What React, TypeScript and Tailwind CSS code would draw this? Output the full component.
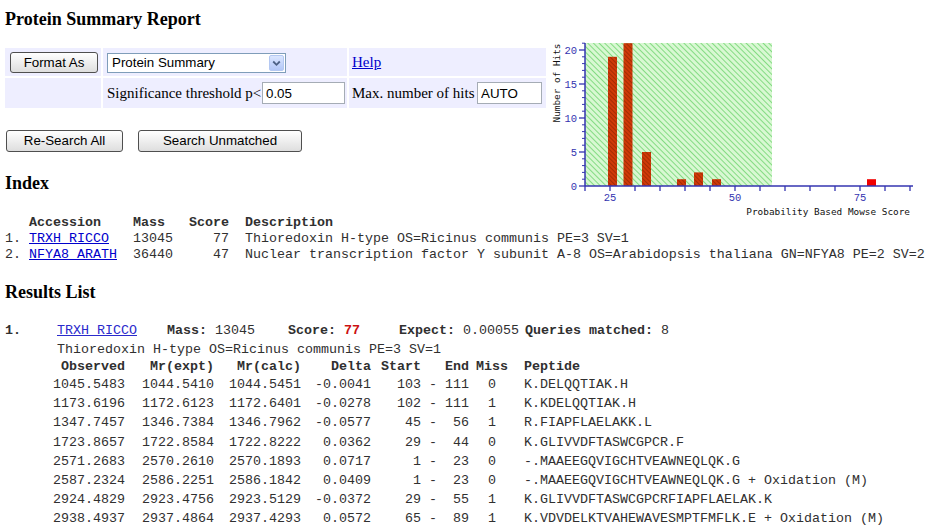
import React from 'react';

interface PeptideRow {
  observed: string;
  expt: string;
  calc: string;
  delta: string;
  start: string;
  end: string;
  miss: string;
  peptide: string;
}

const peptides: PeptideRow[] = [
  { observed: '1045.5483', expt: '1044.5410', calc: '1044.5451', delta: '-0.0041', start: '103', end: '111', miss: '0', peptide: 'K.DELQQTIAK.H' },
  { observed: '1173.6196', expt: '1172.6123', calc: '1172.6401', delta: '-0.0278', start: '102', end: '111', miss: '1', peptide: 'K.KDELQQTIAK.H' },
  { observed: '1347.7457', expt: '1346.7384', calc: '1346.7962', delta: '-0.0577', start: '45', end: '56', miss: '1', peptide: 'R.FIAPFLAELAKK.L' },
  { observed: '1723.8657', expt: '1722.8584', calc: '1722.8222', delta: '0.0362', start: '29', end: '44', miss: '0', peptide: 'K.GLIVVDFTASWCGPCR.F' },
  { observed: '2571.2683', expt: '2570.2610', calc: '2570.1893', delta: '0.0717', start: '1', end: '23', miss: '0', peptide: '-.MAAEEGQVIGCHTVEAWNEQLQK.G' },
  { observed: '2587.2324', expt: '2586.2251', calc: '2586.1842', delta: '0.0409', start: '1', end: '23', miss: '0', peptide: '-.MAAEEGQVIGCHTVEAWNEQLQK.G + Oxidation (M)' },
  { observed: '2924.4829', expt: '2923.4756', calc: '2923.5129', delta: '-0.0372', start: '29', end: '55', miss: '1', peptide: 'K.GLIVVDFTASWCGPCRFIAPFLAELAK.K' },
  { observed: '2938.4937', expt: '2937.4864', calc: '2937.4293', delta: '0.0572', start: '65', end: '89', miss: '1', peptide: 'K.VDVDELKTVAHEWAVESMPTFMFLK.E + Oxidation (M)' },
];

// histogram bars: local x, value, solid red for the significant hit
const bars = [
  { x: 62, v: 19, hit: false },
  { x: 77.5, v: 21, hit: false },
  { x: 96, v: 5, hit: false },
  { x: 131, v: 1, hit: false },
  { x: 148, v: 2, hit: false },
  { x: 166, v: 1, hit: false },
  { x: 321, v: 1, hit: true },
];

const ZERO = 150;
const UNIT = 6.8;

const MowseChart: React.FC = () => {
  const minor = Array.from({ length: 21 }, (_, i) => i + 1).filter((v) => v % 5 !== 0);
  return (
    <svg width="380" height="184" viewBox="0 0 380 184" className="mt-[7px] -mb-[27px] shrink-0">
      <defs>
        <pattern id="greenHatch" width="4" height="4" patternUnits="userSpaceOnUse" patternTransform="rotate(-45)">
          <rect width="4" height="4" fill="#d8f8d2" />
          <line x1="0" y1="0" x2="0" y2="4" stroke="#6fd46f" strokeWidth="1.6" />
        </pattern>
        <pattern id="barHatch" width="3" height="3" patternUnits="userSpaceOnUse" patternTransform="rotate(-45)">
          <rect width="3" height="3" fill="#d03a08" />
          <line x1="0" y1="0" x2="0" y2="3" stroke="#7a1e00" strokeWidth="1" />
        </pattern>
      </defs>

      <rect x="39" y="7" width="187" height="143" fill="url(#greenHatch)" />

      {bars.map((b, i) => (
        <rect
          key={i}
          x={b.x}
          y={ZERO - b.v * UNIT}
          width="9"
          height={b.v * UNIT}
          fill={b.hit ? '#f00000' : 'url(#barHatch)'}
        />
      ))}

      {/* axes */}
      <line x1="39" y1="7" x2="39" y2="150" stroke="#3434b0" strokeWidth="1.5" />
      <line x1="39" y1="150" x2="367" y2="150" stroke="#3434b0" strokeWidth="1.5" />

      {minor.map((v) => (
        <line key={v} x1="36" y1={ZERO - v * UNIT} x2="39" y2={ZERO - v * UNIT} stroke="#3434b0" strokeWidth="1" />
      ))}
      {[0, 5, 10, 15, 20].map((v) => (
        <g key={v}>
          <line x1="33" y1={ZERO - v * UNIT} x2="39" y2={ZERO - v * UNIT} stroke="#3434b0" strokeWidth="1.3" />
          <text x="31" y={ZERO - v * UNIT + 3.5} textAnchor="end" fontSize="10.5" fill="#3434b0" fontFamily="Liberation Mono, monospace">
            {v}
          </text>
        </g>
      ))}

      {Array.from({ length: 14 }, (_, k) => (
        <line key={k} x1={39 + 25 * k} y1="150" x2={39 + 25 * k} y2="155" stroke="#3434b0" strokeWidth="1.3" />
      ))}
      {[
        { x: 64, t: '25' },
        { x: 189, t: '50' },
        { x: 314, t: '75' },
      ].map((l) => (
        <text key={l.t} x={l.x} y="165" textAnchor="middle" fontSize="10.5" fill="#3434b0" fontFamily="Liberation Mono, monospace">
          {l.t}
        </text>
      ))}

      <text x="364" y="178.5" textAnchor="end" fontSize="9.4" fill="#111" fontFamily="DejaVu Sans Mono, monospace">
        Probability Based Mowse Score
      </text>
      <text transform="translate(13.5,47) rotate(-90)" textAnchor="middle" fontSize="9.4" fill="#111" fontFamily="DejaVu Sans Mono, monospace">
        Number of Hits
      </text>
    </svg>
  );
};

const App: React.FC = () => {
  return (
    <div className="w-[935px] min-h-[529px] bg-white pl-[5px] pt-[9px] text-black">
      <h1 className="font-['Liberation_Serif',serif] text-[18px] leading-[20px] font-bold">Protein Summary Report</h1>

      <div className="flex">
        <div className="w-[541px] shrink-0">
          {/* format form */}
          <div className="mt-[19px] grid grid-cols-[96px_244px_197px] grid-rows-[28px_30px] gap-[2px] bg-white">
            <div className="flex items-start bg-[#eeeeff] pl-[5px] pt-[4px]">
              <button className="h-[21px] w-[88px] rounded-[3px] border border-[#4f4f4f] bg-linear-to-b from-white to-[#dedede] font-['Liberation_Sans',Arial,sans-serif] text-[13.33px] leading-[19px] text-black">
                Format As
              </button>
            </div>
            <div className="bg-[#eeeeff] pl-[4px] pt-[5px]">
              <div className="flex h-[20px] w-[179px] items-center border border-[#7f9db9] bg-white">
                <span className="flex-1 pl-[4px] font-['Liberation_Sans',Arial,sans-serif] text-[13.33px] leading-[18px]">Protein Summary</span>
                <span className="mr-[1px] flex h-[16px] w-[15px] items-center justify-center rounded-[2px] border border-[#b4c8f2] bg-linear-to-b from-[#dbe6ff] to-[#b3c7f7]">
                  <svg width="9" height="7" viewBox="0 0 9 7">
                    <path d="M1.2 1.5 L4.5 4.8 L7.8 1.5" fill="none" stroke="#4d6185" strokeWidth="1.8" />
                  </svg>
                </span>
              </div>
            </div>
            <div className="flex items-center bg-[#eeeeff] pl-[3px]">
              <a href="#" className="font-['Liberation_Serif',serif] text-[15px] leading-[18px] text-[#0000cc] underline">
                Help
              </a>
            </div>

            <div className="bg-[#eeeeff]" />
            <div className="flex items-center bg-[#eeeeff] pl-[4px] pr-[2px]">
              <span className="font-['Liberation_Serif',serif] text-[15px] whitespace-nowrap">Significance threshold p&lt;</span>
              <input
                readOnly
                value="0.05"
                className="ml-auto h-[22px] w-[83px] border border-[#a5acb5] bg-white pl-[3px] font-['Liberation_Sans',Arial,sans-serif] text-[13.33px] outline-none"
              />
            </div>
            <div className="flex items-center bg-[#eeeeff] pl-[3px] pr-[4px]">
              <span className="font-['Liberation_Serif',serif] text-[15px] whitespace-nowrap">Max. number of hits</span>
              <input
                readOnly
                value="AUTO"
                className="ml-auto h-[22px] w-[65px] border border-[#a5acb5] bg-white pl-[3px] font-['Liberation_Sans',Arial,sans-serif] text-[13.33px] outline-none"
              />
            </div>
          </div>

          <div className="mt-[22px] flex">
            <button className="ml-[1px] h-[22px] w-[117px] rounded-[3px] border border-[#4f4f4f] bg-linear-to-b from-white to-[#dedede] font-['Liberation_Sans',Arial,sans-serif] text-[13.33px] leading-[20px]">
              Re-Search All
            </button>
            <button className="ml-[15px] h-[22px] w-[164px] rounded-[3px] border border-[#4f4f4f] bg-linear-to-b from-white to-[#dedede] font-['Liberation_Sans',Arial,sans-serif] text-[13.33px] leading-[20px]">
              Search Unmatched
            </button>
          </div>

          <h2 className="mt-[21px] font-['Liberation_Serif',serif] text-[18px] leading-[20px] font-bold">Index</h2>
        </div>

        <MowseChart />
      </div>

      {/* index listing */}
      <div className="mt-[22px] font-['Liberation_Mono','Courier_New',monospace] text-[13.333px] leading-[16px] whitespace-pre text-[#303030]">
        <div className="font-bold">{'   Accession    Mass   Score  Description'}</div>
        <div>
          {'1. '}
          <a href="#" className="text-[#0000cc] underline">TRXH_RICCO</a>
          {'   13045     77  Thioredoxin H-type OS=Ricinus communis PE=3 SV=1'}
        </div>
        <div>
          {'2. '}
          <a href="#" className="text-[#0000cc] underline">NFYA8_ARATH</a>
          {'  36440     47  Nuclear transcription factor Y subunit A-8 OS=Arabidopsis thaliana GN=NFYA8 PE=2 SV=2'}
        </div>
      </div>

      <h2 className="mt-[19px] font-['Liberation_Serif',serif] text-[18px] leading-[20px] font-bold">Results List</h2>

      <div className="-ml-[5px] mt-[19px] font-['Liberation_Mono','Courier_New',monospace] text-[13.333px] whitespace-pre text-[#303030]">
        <div className="flex h-[19px] items-center pl-[5px]">
          <span className="w-[52px] font-bold">1.</span>
          <span className="w-[110px]">
            <a href="#" className="text-[#2a2acc] underline">TRXH_RICCO</a>
          </span>
          <span className="w-[121px]">
            <b>Mass:</b> 13045
          </span>
          <span className="w-[111px]">
            <b>Score:</b> <b className="text-[#cc1111]">77</b>
          </span>
          <span className="w-[126px]">
            <b>Expect:</b> 0.00055
          </span>
          <span>
            <b>Queries matched:</b> 8
          </span>
        </div>
        <div className="flex h-[19px] items-center pl-[57px]">Thioredoxin H-type OS=Ricinus communis PE=3 SV=1</div>

        <div className="pl-[53px]">
          <div className="flex h-[16.5px] items-center font-bold">
            <span className="w-[72px] text-right">Observed</span>
            <span className="w-[89px] text-right">Mr(expt)</span>
            <span className="w-[87px] text-right">Mr(calc)</span>
            <span className="w-[70px] text-right">Delta</span>
            <span className="w-[50px] text-right">Start</span>
            <span className="w-[24px]" />
            <span className="w-[24px] text-right">End</span>
            <span className="w-[46px] text-center">Miss</span>
            <span className="ml-[9px]">Peptide</span>
          </div>
          {peptides.map((p, i) => (
            <div key={i} className="flex h-[19.2px] items-center">
              <span className="w-[72px] text-right">{p.observed}</span>
              <span className="w-[89px] text-right">{p.expt}</span>
              <span className="w-[87px] text-right">{p.calc}</span>
              <span className="w-[70px] text-right">{p.delta}</span>
              <span className="w-[50px] text-right">{p.start}</span>
              <span className="w-[24px] text-center">-</span>
              <span className="w-[24px] text-right">{p.end}</span>
              <span className="w-[46px] text-center">{p.miss}</span>
              <span className="ml-[9px]">{p.peptide}</span>
            </div>
          ))}
        </div>
      </div>
    </div>
  );
};

export default App;
